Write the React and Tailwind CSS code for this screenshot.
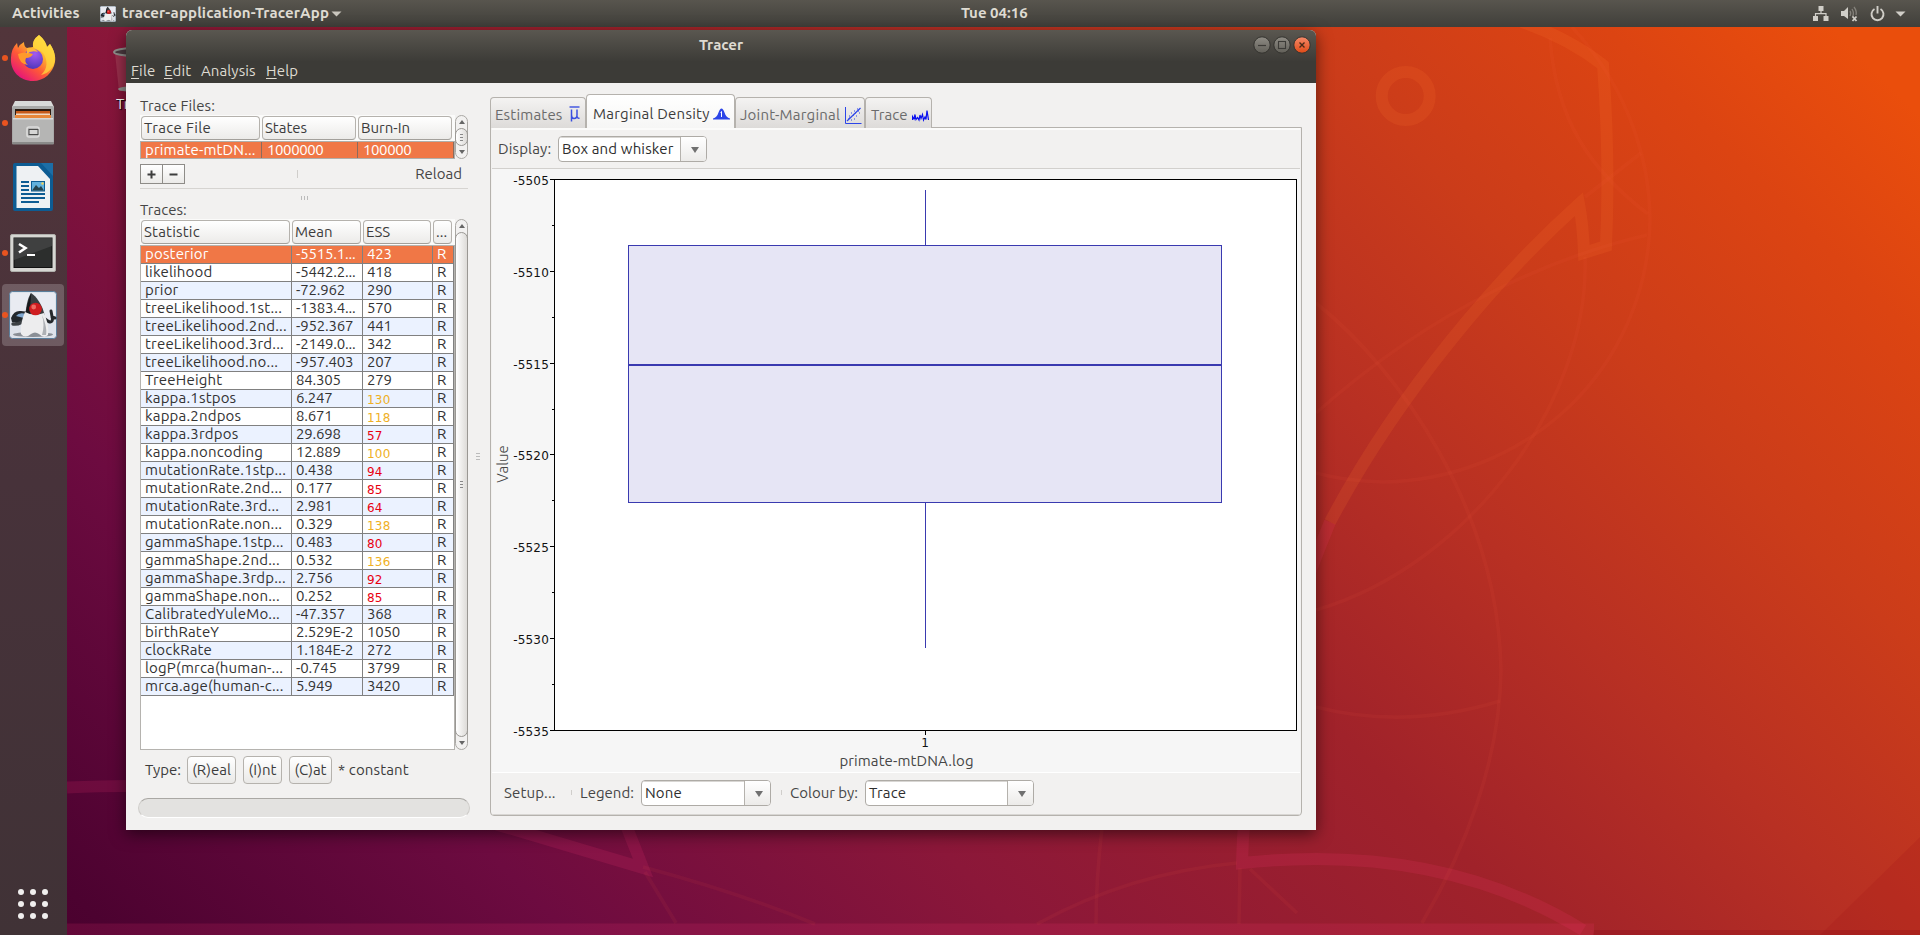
import React from "react";

const TRACES = [
  ["posterior", "-5515.1...", "423"],
  ["likelihood", "-5442.2...", "418"],
  ["prior", "-72.962", "290"],
  ["treeLikelihood.1st...", "-1383.4...", "570"],
  ["treeLikelihood.2nd...", "-952.367", "441"],
  ["treeLikelihood.3rd...", "-2149.0...", "342"],
  ["treeLikelihood.no...", "-957.403", "207"],
  ["TreeHeight", "84.305", "279"],
  ["kappa.1stpos", "6.247", "130"],
  ["kappa.2ndpos", "8.671", "118"],
  ["kappa.3rdpos", "29.698", "57"],
  ["kappa.noncoding", "12.889", "100"],
  ["mutationRate.1stp...", "0.438", "94"],
  ["mutationRate.2nd...", "0.177", "85"],
  ["mutationRate.3rd...", "2.981", "64"],
  ["mutationRate.non...", "0.329", "138"],
  ["gammaShape.1stp...", "0.483", "80"],
  ["gammaShape.2nd...", "0.532", "136"],
  ["gammaShape.3rdp...", "2.756", "92"],
  ["gammaShape.non...", "0.252", "85"],
  ["CalibratedYuleMo...", "-47.357", "368"],
  ["birthRateY", "2.529E-2", "1050"],
  ["clockRate", "1.184E-2", "272"],
  ["logP(mrca(human-...", "-0.745", "3799"],
  ["mrca.age(human-c...", "5.949", "3420"],
];

function essClass(value, selected) {
  const n = Number(value);
  if (selected) return "";
  if (n < 100) return "relative top-px font-['DejaVu_Sans',sans-serif] text-[12px] tracking-[0.2px] text-[#e80010]";
  if (n < 200) return "relative top-px font-['DejaVu_Sans',sans-serif] text-[12px] tracking-[0.2px] text-[#efb025]";
  return "";
}

function Wallpaper() {
  return (
    <svg className="absolute inset-0" width="1920" height="935" viewBox="0 0 1920 935" fill="none">
      <g stroke="rgba(255,60,120,0.14)" strokeWidth="12">
        <path d="M1330 522C1290 620 1244 740 1242 863Q1440 842 1583 930" />
        <path d="M67 929.5H1594" />
        <path d="M67 787.5Q100 786 130 786" />
        <path d="M485 821L643 868L622 815" />
      </g>
      <g stroke="rgba(255,120,50,0.15)" strokeWidth="12">
        <circle cx="1405.7" cy="96" r="24" />
        <path d="M1522 22Q1568 38 1603 65Q1610 160 1606 246L1584 253Q1583 225 1579 204C1500 275 1400 390 1330 522" />
      </g>
      <g stroke="rgba(255,100,70,0.07)" strokeWidth="3.6">
        <path d="M1572 27C1630 90 1655 170 1649 240C1636 380 1520 480 1383 482Q1345 481 1316 473" />
        <path d="M1550 38C1556 120 1590 170 1648 214" />
        <path d="M1641 153L1585 197" />
        <path d="M1647 235Q1570 253 1496 290Q1400 338 1316 413" />
        <path d="M1316 303C1400 370 1498 510 1501 670C1500 760 1465 850 1422 923" />
        <path d="M1585 257C1590 400 1470 565 1316 610" />
        <path d="M1316 707Q1405 730 1500 701" />
        <path d="M1102 828Q1096 880 1096 924" />
        <path d="M1037 924Q1130 873 1237 863" />
        <path d="M1240 868L1239 924" />
        <path d="M1250 869L1297 913" />
        <path d="M643 867Q740 893 815 924" />
        <path d="M645 872L676 923" />
      </g>
      <path d="M1920 837L1820 935H1920Z" fill="rgba(150,0,20,0.12)" />
      <path d="M1594 930H1920V935H1593Z" fill="rgba(130,0,20,0.2)" />
    </svg>
  );
}

function Duke({ className }) {
  return (
    <svg className={className} viewBox="0 0 48 48">
      <rect x="0.5" y="0.5" width="47" height="47" rx="3" fill="#dde2ea" stroke="#5b7f9c" />
      <rect x="2" y="2" width="44" height="26" rx="2" fill="#eef0f5" opacity="0.7" />
      <ellipse cx="24" cy="43.500" rx="20" ry="2.500" fill="#8a8f96" />
      <path d="M2 27Q5 19 12 20L20 21L17 30L12 33L3 31Z" fill="#23282d" />
      <path d="M7 25Q10 21 17 23L15 27Z" fill="#7fa6cf" />
      <path d="M17 27Q12 34 4 33" stroke="#3c4145" strokeWidth="3.400" fill="none" strokeLinecap="round" />
      <path d="M36 28Q43 34 43.500 28L42 20M43 26L46 27" stroke="#25292c" strokeWidth="3" fill="none" strokeLinecap="round" />
      <path d="M22 2C27 5 34 14 36 26L16 27C17 17 18 8 22 2Z" fill="#3a3e41" />
      <path d="M22 2C19 10 17 18 16 27L21 26C21 16 22 8 22 2Z" fill="#17191b" />
      <path d="M16 21Q25 26 35 22C39 31 40 40 39 44Q35 48 30 43Q26 40 22 43Q16 48 12 43C11 37 13 28 16 21Z" fill="#ededee" />
      <path d="M33 24C37 33 38 40 37 44L33 44Q36 34 33 24Z" fill="#aeb1b5" />
      <circle cx="26.500" cy="18" r="6.300" fill="#cf1d20" />
      <circle cx="24.700" cy="16" r="2.400" fill="#ef6a62" />
    </svg>
  );
}

function Firefox() {
  return (
    <svg className="h-[46px] w-[46px]" viewBox="0 0 46 46">
      <defs>
        <linearGradient id="fx" x1="0.85" y1="0.1" x2="0.2" y2="0.95">
          <stop offset="0" stopColor="#fff14a" />
          <stop offset="0.35" stopColor="#ffb02e" />
          <stop offset="0.62" stopColor="#ff5a36" />
          <stop offset="1" stopColor="#e5127c" />
        </linearGradient>
        <radialGradient id="fp" cx="0.6" cy="0.25" r="0.8">
          <stop offset="0" stopColor="#a45af0" />
          <stop offset="1" stopColor="#4a35b8" />
        </radialGradient>
      </defs>
      <path d="M29 0C34 4 36 8 37 12L40 9C44 15 46 21 45 27C43 38 34 46 23 46C10 46 0 36 1 23C1 17 3 12 7 8L8 13Q10 9 14 7Q14 12 17 13L23 12Q22 5 29 0Z" fill="url(#fx)" />
      <path d="M29 0C34 4 36 8 37 12L40 9C44 15 46 21 44 29C41 36 36 39 31 40C38 34 38 25 33 18C29 14 23 14 23 11Q22 5 29 0Z" fill="#ffd83d" opacity="0.75" />
      <circle cx="23" cy="24" r="10" fill="url(#fp)" />
      <path d="M8 19Q15 16 23 19Q21 23 16 23Q14 27 18 30Q9 29 8 19Z" fill="#ff9a2b" />
      <path d="M17 13Q24 12 28 17Q21 15 17 19Z" fill="#ffb638" />
    </svg>
  );
}

function Files() {
  return (
    <svg className="h-[46px] w-[44px]" viewBox="0 0 44 46">
      <path d="M4 1H40L43 7V14H1V7Z" fill="#d9d9d8" />
      <rect x="1" y="6" width="42" height="38" rx="2" fill="#a9a9a8" />
      <rect x="4" y="9" width="36" height="10" fill="#2b1b12" />
      <rect x="5" y="11" width="34" height="3" fill="#c65a1b" />
      <rect x="5" y="13.500" width="34" height="2" fill="#f0d9c5" />
      <rect x="4" y="15" width="36" height="3" fill="#e8873a" />
      <rect x="2" y="18" width="40" height="25" rx="1" fill="#b5b5b4" />
      <rect x="2" y="18" width="40" height="1.500" fill="#d8d8d7" />
      <rect x="1" y="42" width="42" height="2.500" rx="1" fill="#8a8a89" />
      <rect x="16" y="27" width="12" height="10" rx="2" fill="none" stroke="#dcdcdb" strokeWidth="1.600" />
      <rect x="18" y="29.500" width="9" height="5" fill="#d6d6d5" stroke="#4a4a4a" />
    </svg>
  );
}

function Writer() {
  return (
    <svg className="h-[48px] w-[40px]" viewBox="0 0 40 48">
      <path d="M2 0H29L40 12V46Q40 48 38 48H2Q0 48 0 46V2Q0 0 2 0Z" fill="#0d5c93" />
      <path d="M28 0H40V13Z" fill="#1c6ea6" />
      <path d="M3.500 3H25L37 16V45H3.500Z" fill="#eef1f3" />
      <path d="M8 19H16M8 23H16M8 27H16M8 31H32M8 35H32M8 39H26" stroke="#0d5c93" strokeWidth="1.900" />
      <rect x="18.500" y="18.500" width="13" height="9.500" fill="#62b1dc" stroke="#0d5c93" />
      <path d="M19 27.500L23 22L26 25L28 23L31 27.500Z" fill="#27434c" />
      <circle cx="29.500" cy="20.500" r="1.200" fill="#f5d25a" />
    </svg>
  );
}

function Terminal() {
  return (
    <svg className="h-[38px] w-[46px]" viewBox="0 0 46 38">
      <rect x="0.500" y="0.500" width="45" height="37" rx="1.500" fill="#d6d6d2" stroke="#b0b0ac" />
      <rect x="4" y="4" width="38" height="29.500" fill="#2c2e2d" stroke="#111" />
      <path d="M4 4H42V12L4 26Z" fill="#474948" opacity="0.7" />
      <path d="M9 10L15.500 14L9 18.500" fill="none" stroke="#fff" strokeWidth="2.600" />
      <path d="M17 21H25" stroke="#fff" strokeWidth="2" />
    </svg>
  );
}

function DockItem({ running, active, children, className }) {
  return (
    <div className={"relative flex w-[66px] items-center justify-center " + className}>
      {running && <span className="absolute top-1/2 left-0.5 size-1.5 -translate-y-1/2 rounded-full bg-[#e95420]" />}
      {active ? (
        <div className="flex size-[62px] items-center justify-center rounded bg-white/20">{children}</div>
      ) : (
        children
      )}
    </div>
  );
}

function Dock() {
  return (
    <nav className="relative flex h-[908px] w-[67px] flex-col bg-[#453338]/95 bg-linear-to-b from-[#52353b] via-[#47323a] to-[#403236]">
      <DockItem running className="mt-[7px] h-[47px]"><Firefox /></DockItem>
      <DockItem running className="mt-[18px] h-[47px]"><Files /></DockItem>
      <DockItem className="mt-[17px] h-[48px]"><Writer /></DockItem>
      <DockItem running className="mt-[22px] h-[39px]"><Terminal /></DockItem>
      <DockItem running active className="mt-[12px] h-[62px]"><Duke className="size-12" /></DockItem>
      <div className="mt-auto mb-[16px] ml-[17.500px] grid w-[31px] grid-cols-3 gap-x-[5.500px] gap-y-[5.500px]">
        {Array.from({ length: 9 }, (_, i) => (
          <span key={i} className="size-[6.500px] rounded-full bg-[#f0efee]" />
        ))}
      </div>
    </nav>
  );
}

function TopBar() {
  return (
    <header className="relative flex h-[27px] items-center bg-linear-to-b from-[#58554e] to-[#403f3a] text-[15px] font-bold text-[#dfdbd2]">
      <span className="ml-3 w-[88px] tracking-[0.1px]">Activities</span>
      <Duke className="size-4" />
      <span className="ml-1.5 w-[205px] tracking-[0.15px] whitespace-nowrap">tracer-application-TracerApp</span>
      <svg className="ml-1" width="11" height="6" viewBox="0 0 11 6"><path d="M0.500 0.500H10.500L5.500 5.500Z" fill="#c9c6be" /></svg>
      <span className="mr-auto ml-[619px]">Tue 04:16</span>
      <div className="mr-[14px] flex items-center text-[#d4d1c9]">
        <svg className="mr-3" width="16" height="16" viewBox="0 0 16 16" fill="#d0cec8">
          <path d="M5.500 0H10.500V5H5.500ZM0 10H5V15H0ZM10.500 10H15.500V15H10.500Z" />
          <path d="M8 5V8M2.500 10.500V7.700H13V10.500" fill="none" stroke="#d0cec8" strokeWidth="1.200" />
        </svg>
        <svg className="mr-3" width="17" height="16" viewBox="0 0 17 16" fill="#d0cec8">
          <path d="M0 5H3L7 1V13L3 10H0Z" />
          <path d="M9 5Q10.500 7 9 10M11 3Q13.500 7 11.500 11M13 1Q16 5 15 9" fill="none" stroke="#85827b" strokeWidth="1.300" />
          <path d="M11.500 10.500L15.500 15M15.500 10.500L11.500 15" stroke="#d0cec8" strokeWidth="1.800" />
        </svg>
        <svg className="mr-[10px]" width="15" height="16" viewBox="0 0 15 16" fill="none" stroke="#d0cec8" strokeWidth="1.900">
          <path d="M4.500 3A6 6 0 1 0 10.500 3" />
          <path d="M7.500 0V7.500" />
        </svg>
        <svg width="11" height="6" viewBox="0 0 11 6"><path d="M0.500 0.500H10.500L5.500 5.500Z" fill="#d0cec8" /></svg>
      </div>
    </header>
  );
}

function WindowButton({ close, children }) {
  return (
    <svg width="18" height="18" viewBox="0 0 18 18" fill="none">
      <defs>
        <linearGradient id={close ? "wbc" : "wbn"} x1="0" y1="0" x2="0" y2="1">
          <stop offset="0" stopColor={close ? "#f58a6a" : "#8f8c85"} />
          <stop offset="1" stopColor={close ? "#df4a16" : "#615f58"} />
        </linearGradient>
      </defs>
      <circle cx="9" cy="9" r="8.200" fill={close ? "url(#wbc)" : "url(#wbn)"} stroke="#34332f" />
      {children}
    </svg>
  );
}

function TitleBar() {
  return (
    <div className="h-[53px] rounded-t-md bg-linear-to-b from-[#5a5750] from-0% via-[#3c3b37] via-60% to-[#3c3b37] text-[#dfdbd2]">
      <div className="flex h-[30px] items-center">
        <span className="ml-[573px] w-[46px] text-[15px] font-bold">Tracer</span>
        <div className="mr-[5px] ml-auto flex gap-[2px]">
          <WindowButton><path d="M5 9.500H13" stroke="#3c3b37" strokeWidth="1.200" /></WindowButton>
          <WindowButton><rect x="5.500" y="5.500" width="7" height="7" stroke="#3c3b37" strokeWidth="1.100" /></WindowButton>
          <WindowButton close><path d="M6.500 6.500L11.500 11.500M11.500 6.500L6.500 11.500" stroke="#4a2a18" strokeWidth="1.400" /></WindowButton>
        </div>
      </div>
      <div className="flex h-[23px] pl-[5px] text-[15px] leading-[21px]">
        <span className="w-[33px] tracking-[0.2px]"><u className="underline-offset-2">F</u>ile</span>
        <span className="w-[37px] tracking-[0.2px]"><u className="underline-offset-2">E</u>dit</span>
        <span className="w-[65px] tracking-[0.1px]">Analysis</span>
        <span className="tracking-[0.2px]"><u className="underline-offset-2">H</u>elp</span>
      </div>
    </div>
  );
}

function Head({ className, children }) {
  return (
    <div className={"h-[24px] rounded border border-[#b5b2ad] border-b-[#a3a09b] bg-linear-to-b from-white to-[#ecebe9] pl-[2px] leading-[22px] text-[#3c3c3c] " + className}>
      {children}
    </div>
  );
}

function ScrollArrow({ down }) {
  return (
    <svg width="6" height="4" viewBox="0 0 6 4">
      <path d={down ? "M0 0H6L3 4Z" : "M0 4H6L3 0Z"} fill="#666" />
    </svg>
  );
}

function Scrollbar({ className }) {
  return (
    <div className={"flex w-[13px] flex-col items-center rounded-full border border-[#aaa8a4] bg-[#f2f1f0] " + className}>
      <div className="flex h-[12px] items-center"><ScrollArrow /></div>
      <div className="flex w-[13px] flex-1 flex-col items-center justify-center gap-[2px] rounded-full border border-[#999793] bg-linear-to-r from-white to-[#dddbd8]">
        <i className="h-px w-[3px] bg-[#888]" />
        <i className="h-px w-[3px] bg-[#888]" />
        <i className="h-px w-[3px] bg-[#888]" />
      </div>
      <div className="flex h-[12px] items-center"><ScrollArrow down /></div>
    </div>
  );
}

function LeftPanel() {
  return (
    <section className="ml-[12px] flex w-[332px] flex-col text-[15px] text-[#464646]">
      <div className="h-[32px] pt-[14px] pl-[2px] leading-[18px] tracking-[0.1px]">Trace Files:</div>
      <div className="flex h-[44px] pl-[2px]">
        <div className="w-[315px] bg-[#fbfbfa]">
          <div className="flex h-[26px] items-start gap-[2px] pt-px pl-px">
            <Head className="w-[119px]"><span className="tracking-[0.35px]">Trace File</span></Head>
            <Head className="w-[94px]">States</Head>
            <Head className="w-[94px]">Burn-In</Head>
          </div>
          <div className="flex h-[18px] border border-[#b0aeaa] bg-[#f07746] leading-[15px] text-white">
            <div className="w-[121px] border-r border-[#8c6b5c] pl-[4px] tracking-[0.15px] whitespace-nowrap">primate-mtDN...</div>
            <div className="w-[96px] border-r border-[#8c6b5c] pl-[5px] tracking-[-0.400px]">1000000</div>
            <div className="w-[96px] border-r border-[#8c6b5c] pl-[5px] tracking-[-0.400px]">100000</div>
          </div>
        </div>
        <Scrollbar className="h-[44px]" />
      </div>
      <div className="mt-[5px] flex h-[20px] items-center pl-[2px]">
        <div className="flex h-[20px] w-[45px] border border-[#8e8c88] bg-linear-to-b from-white to-[#ebeae8]">
          <div className="flex w-[22px] items-center justify-center border-r border-[#8e8c88]">
            <svg width="9" height="9" viewBox="0 0 9 9"><path d="M4.500 0.500V8.500M0.500 4.500H8.500" stroke="#3d3d3d" strokeWidth="2" /></svg>
          </div>
          <div className="flex w-[21px] items-center justify-center">
            <svg width="9" height="9" viewBox="0 0 9 9"><path d="M0.500 4.500H8.500" stroke="#3d3d3d" strokeWidth="2" /></svg>
          </div>
        </div>
        <i className="ml-[112px] h-[8px] w-px bg-[#d0cecb]" />
        <span className="mr-[8px] ml-auto leading-[18px]">Reload</span>
      </div>
      <div className="mt-[4px] ml-[2px] h-px w-[328px] bg-[#d6d4d1]" />
      <div className="mt-[7px] ml-[163px] flex h-[4px] gap-[2px]">
        <i className="w-px bg-[#bbb]" />
        <i className="w-px bg-[#bbb]" />
        <i className="w-px bg-[#bbb]" />
      </div>
      <div className="h-[19px] pl-[2px] leading-[20px]">Traces:</div>
      <div className="flex h-[531px] pl-[2px]">
        <div className="flex w-[315px] flex-col bg-[#fbfbfa]">
          <div className="flex h-[26px] gap-[2px] pt-px pl-px">
            <Head className="w-[149px]"><span className="tracking-[0.2px]">Statistic</span></Head>
            <Head className="w-[69px]">Mean</Head>
            <Head className="w-[68px]">ESS</Head>
            <Head className="w-[19px]">...</Head>
          </div>
          <div className="flex-1 border border-[#b5b3af] bg-white">
            {TRACES.map(([name, mean, ess], i) => (
              <div
                key={name}
                className={
                  "flex h-[18px] border-b border-[#808080] leading-[15px] " +
                  (i === 0 ? "bg-[#f07746] text-white" : i % 2 ? "bg-white text-[#333]" : "bg-[#ebf2ff] text-[#333]")
                }
              >
                <div className="w-[151px] border-r border-[#808080] pl-[4px] tracking-[0.18px] whitespace-nowrap">{name}</div>
                <div className="w-[71px] border-r border-[#808080] pl-[4px] tracking-[-0.200px] whitespace-nowrap">{mean}</div>
                <div className="w-[70px] border-r border-[#808080] pl-[4px] tracking-[-0.200px]">
                  <span className={essClass(ess, i === 0)}>{ess}</span>
                </div>
                <div className="w-[21px] border-r border-[#808080] pl-[4px]">R</div>
              </div>
            ))}
          </div>
        </div>
        <Scrollbar className="h-[531px]" />
      </div>
      <div className="mt-[6px] flex h-[28px] items-center pl-[7px] leading-[26px] text-[#3c3c3c]">
        <span className="w-[42px]">Type:</span>
        <span className="h-[28px] w-[49px] rounded border border-[#b5b2ad] bg-linear-to-b from-white to-[#eae9e7] text-center">(R)eal</span>
        <span className="ml-[7px] h-[28px] w-[39px] rounded border border-[#b5b2ad] bg-linear-to-b from-white to-[#eae9e7] text-center">(I)nt</span>
        <span className="ml-[7px] h-[28px] w-[43px] rounded border border-[#b5b2ad] bg-linear-to-b from-white to-[#eae9e7] text-center">(C)at</span>
        <span className="ml-[6px] tracking-[0.15px]">* constant</span>
      </div>
      <div className="mt-[14px] h-[20px] rounded-full border border-[#cfcdca] border-t-[#aaa8a4] border-b-white bg-[#e3e2e0]" />
    </section>
  );
}

function Combo({ className, textClass, children }) {
  return (
    <div className={"flex h-[26px] overflow-hidden rounded border border-[#aeaba6] bg-white leading-[24px] text-[#2e2e2e] " + className}>
      <div className={"border-r border-[#b5b2ad] pl-[3px] tracking-[0.15px] whitespace-nowrap shadow-[inset_0_1px_0_#d8d6d3] " + textClass}>{children}</div>
      <div className="flex flex-1 items-center justify-center bg-linear-to-b from-white to-[#ecebe9] pt-[2px] pl-[3px]">
        <svg width="8" height="6" viewBox="0 0 8 6"><path d="M0 0H8L4 6Z" fill="#707070" /></svg>
      </div>
    </div>
  );
}

function Tabs() {
  return (
    <div className="relative z-10 flex h-[33px] items-end leading-[33px] text-[#6b6b6b]">
      <div className="flex h-[31px] w-[96px] rounded-t border border-b-0 border-[#b5b2ad] bg-linear-to-b from-[#f4f3f2] to-[#dddbd9] pl-[4px]">
        <span className="w-[74px] tracking-[0.2px]">Estimates</span>
        <svg className="mt-[8px]" width="11" height="17" viewBox="0 0 11 17" fill="none" stroke="#3a4fe0">
          <path d="M0.500 1H10.500" strokeWidth="1.400" />
          <path d="M2.500 3.500V15.500M2.500 9Q2.500 12.500 5 12.500Q8 12.500 8 9V3.500M8 10Q8 12.500 10.500 12.200" strokeWidth="1.500" />
        </svg>
      </div>
      <div className="flex h-[34px] w-[149px] rounded-t border border-b-0 border-[#b5b2ad] bg-linear-to-b from-white to-[#f6f6f5] pl-[6px] leading-[37px] text-[#3c3c3c]">
        <span className="w-[120px] tracking-[0.22px] whitespace-nowrap">Marginal Density</span>
        <svg className="mt-[13px]" width="17" height="12" viewBox="0 0 17 12">
          <path d="M0 11.500V10.500Q4 9.500 5.500 4.500Q7 0.500 8.500 0.500Q10 0.500 11.500 4.500Q13 9.500 17 10.500V11.500Z" fill="#2c45e8" />
          <path d="M7.500 4.500L8.500 3.500V9" fill="none" stroke="#fff" />
        </svg>
      </div>
      <div className="flex h-[31px] w-[130px] rounded-t border border-b-0 border-[#b5b2ad] bg-linear-to-b from-[#f4f3f2] to-[#dddbd9] pl-[4px]">
        <span className="w-[105px] tracking-[0.22px] whitespace-nowrap">Joint-Marginal</span>
        <svg className="mt-[9px]" width="17" height="17" viewBox="0 0 17 17">
          <path d="M0.500 0V16.500H16.500" fill="none" stroke="#2c45e8" />
          <path d="M2 14L15.500 1" stroke="#2c45e8" strokeWidth="1.200" />
          <path d="M4 9H5M6 6H7M9 4H10M12 2H13M6 13H7M9 12H10M11 9H12M14 6H15M13 4H14M4 11H5M8 8H9M3 12H4M10 6H11" stroke="#2c45e8" />
        </svg>
      </div>
      <div className="flex h-[31px] w-[67px] rounded-t border border-b-0 border-[#b5b2ad] bg-linear-to-b from-[#f4f3f2] to-[#dddbd9] pl-[5px]">
        <span className="w-[41px]">Trace</span>
        <svg className="mt-[12px]" width="17" height="12" viewBox="0 0 17 12" fill="none" stroke="#0a10ee" strokeWidth="1.200">
          <path d="M0.500 10V6.500L2 9L3 4.500L4 9.500L5.500 7.500L7 10L8 5L9 8.500L10.500 4.500L11.500 10L13 7L14 9.500L15 0.500L16.500 10M5 8L7.500 8.500M1 8.500H4M11 8.500L14 8" />
        </svg>
      </div>
    </div>
  );
}

const Y_TOP = 179.5;
const Y_STEP = 91.833;
const MAJOR = [-5505, -5510, -5515, -5520, -5525, -5530, -5535];

function BoxPlot() {
  return (
    <svg className="block h-[603px] w-[808px] bg-[#f6f6f6]" viewBox="492 169 808 603" shapeRendering="crispEdges">
      <rect x="554.500" y="179.500" width="742" height="551" fill="#fff" stroke="#000" />
      <path d="M925.500 190V245M925.500 502V648" stroke="#3a3ab0" />
      <rect x="628.500" y="245.500" width="593" height="257" fill="#e6e5f5" stroke="#3a3ab0" />
      <path d="M628 365H1222" stroke="#3a3ab0" strokeWidth="2" />
      {MAJOR.map((v, i) => {
        const y = Math.floor(Y_TOP + i * Y_STEP) + 0.5;
        return (
          <g key={v}>
            <path d={"M550 " + y + "H555"} stroke="#000" />
            {i < 6 && <path d={"M552 " + (y + 46) + "H555"} stroke="#000" />}
            <text x="549" y={y + 5.500} textAnchor="end" className="font-['DejaVu_Sans',sans-serif] text-[12px] tracking-[0.2px]" fill="#111">{v}</text>
          </g>
        );
      })}
      <path d="M925.500 731V735" stroke="#000" />
      <text x="925" y="747" textAnchor="middle" className="font-['DejaVu_Sans',sans-serif] text-[12px]" fill="#111">1</text>
      <text x="906.500" y="766" textAnchor="middle" className="text-[15px] tracking-[0.1px]" fill="#464646">primate-mtDNA.log</text>
      <text transform="translate(508 464) rotate(-90)" textAnchor="middle" fontSize="15" fontWeight="300" fill="#464646">Value</text>
    </svg>
  );
}

function RightPanel() {
  return (
    <section className="ml-[10px] flex w-[812px] flex-col pt-[12px] text-[15px] text-[#464646]">
      <Tabs />
      <div className="-mt-px h-[689px] rounded-b border border-[#b5b2ad] bg-[#f2f1f0] px-px">
        <div className="flex h-[41px] items-start border-b border-[#d2d0cd] pt-[8px] pl-[6px] leading-[25px] shadow-[inset_0_2px_0_#fbfbfa]">
          <span className="w-[60px] tracking-[0.15px]">Display:</span>
          <Combo className="w-[149px]" textClass="w-[122px]">Box and whisker</Combo>
        </div>
        <BoxPlot />
        <div className="flex h-[42px] items-start border-t border-white pt-[7px] pl-[12px] leading-[25px]">
          <span className="w-[67px] tracking-[0.15px]">Setup...</span>
          <i className="mt-[10px] h-[5px] w-px bg-[#d0cecb]" />
          <span className="ml-[8px] w-[61px]">Legend:</span>
          <Combo className="w-[130px]" textClass="w-[103px]">None</Combo>
          <i className="mt-[10px] ml-[10px] h-[5px] w-px bg-[#d0cecb]" />
          <span className="ml-[8px] w-[75px] whitespace-nowrap">Colour by:</span>
          <Combo className="w-[169px]" textClass="w-[142px]">Trace</Combo>
        </div>
        <div className="h-px bg-[#d8d6d3]" />
      </div>
    </section>
  );
}

export default function App() {
  return (
    <div className="relative h-[935px] w-[1920px] overflow-hidden bg-[linear-gradient(45deg,#48002c_0%,#4c0230_4%,#6d0b40_20%,#8b1739_36%,#a0222a_54%,#b83023_66%,#cb3c1a_77%,#dc4412_88%,#ea4e0c_96%)] font-['Ubuntu','Noto_Sans',sans-serif]">
      <Wallpaper />
      <TopBar />
      <Dock />
      <div className="absolute top-[47px] left-[113px] w-[44px]">
        <svg width="44" height="46" viewBox="0 0 44 46">
          <path d="M2 6L6 44H38L42 6Z" fill="#9c3650" opacity="0.8" />
          <ellipse cx="22" cy="5" rx="21" ry="4" fill="#4c3a40" stroke="#8e8e8a" strokeWidth="2" />
          <ellipse cx="22" cy="42" rx="17" ry="3" fill="#8e8e8a" />
        </svg>
        <span className="mt-px block pl-[3px] text-[15px] leading-[20px] text-white [text-shadow:1px_1px_1px_#000]">Tr</span>
      </div>
      <main className="absolute top-[30px] left-[126px] h-[800px] w-[1190px] rounded-t-md bg-[#f2f1f0] shadow-[0_4px_16px_rgba(0,0,0,0.55)]">
        <TitleBar />
        <div className="flex h-[747px]">
          <LeftPanel />
          <div className="flex w-[10px] flex-col items-end gap-[2px] pt-[370px]">
            <i className="h-px w-[4px] bg-[#bbb]" />
            <i className="h-px w-[4px] bg-[#bbb]" />
            <i className="h-px w-[4px] bg-[#bbb]" />
          </div>
          <RightPanel />
        </div>
      </main>
    </div>
  );
}
